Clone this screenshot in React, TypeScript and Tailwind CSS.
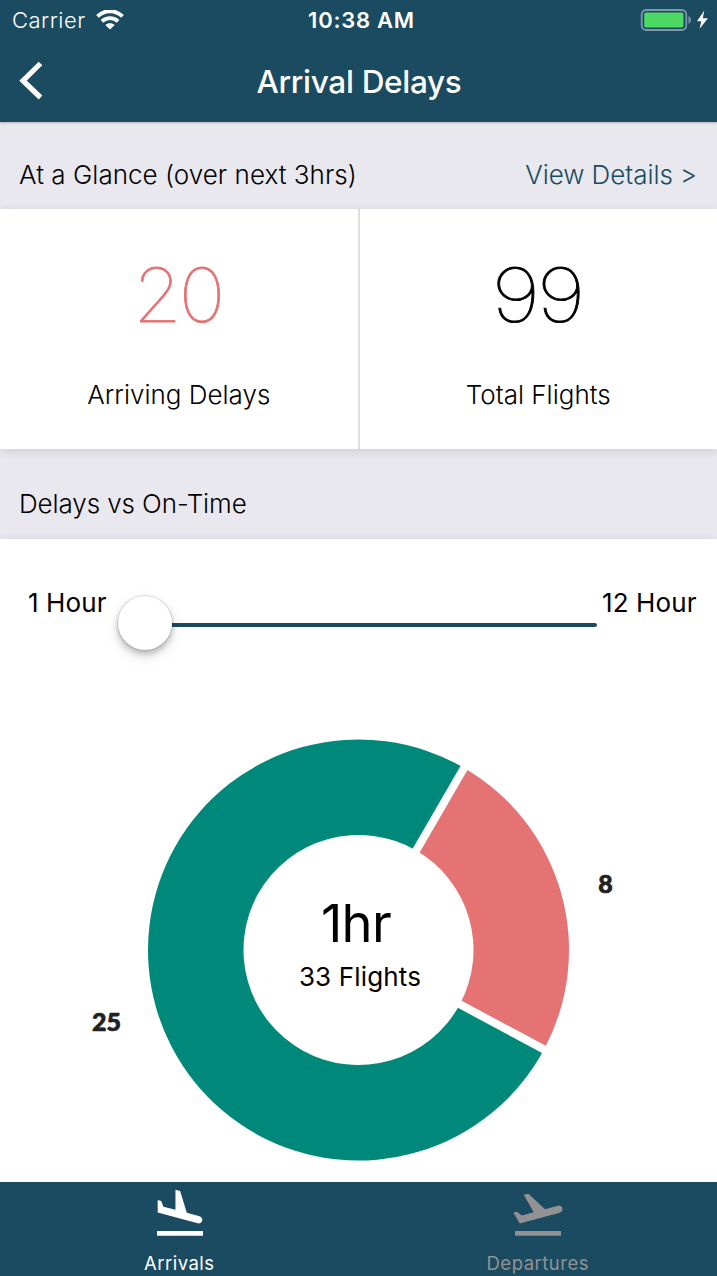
import type { ReactNode } from "react";
import { MdFlightLand, MdFlightTakeoff } from "react-icons/md";

function StatusBar() {
  return (
    <div className="grid h-10 grid-cols-3 items-center pl-3 pr-[8px]">
      <div className="flex items-center">
        <span className="text-[22px] font-light leading-10 tracking-[0.5px]">Carrier</span>
        <svg className="ml-[10px]" width="28" height="20" viewBox="0 0 28 20" fill="none" stroke="white">
          <path d="M1.5 6.4C8.5-.5 19.500-.5 26.500 6.400" strokeWidth="3.900" />
          <path d="M6 11.300C10.400 7 17.600 7 22 11.300" strokeWidth="3.800" />
          <path d="M14 19.500L9.300 15C11.800 12.700 16.200 12.700 18.700 15Z" fill="white" stroke="none" />
        </svg>
      </div>
      <span className="pl-[2px] text-center text-[22px] font-semibold leading-10 tracking-[0.75px]">10:38 AM</span>
      <svg className="justify-self-end" width="69" height="24" viewBox="0 0 69 24" fill="none">
        <rect x="1.700" y="2" width="44.600" height="20" rx="4.500" stroke="#8097a8" strokeWidth="1.800" />
        <rect x="4.200" y="4.500" width="39.300" height="15" rx="2" fill="#4cd964" />
        <path d="M48.500 8.300C51.700 9.300 51.700 14.700 48.500 15.700Z" fill="#8097a8" />
        <path d="M64.300 2.500L57 13.200H61.300L59.600 20.800L68 10.300H62.800Z" fill="white" />
      </svg>
    </div>
  );
}

function NavBar() {
  return (
    <div className="grid h-[82px] grid-cols-[60px_1fr_60px] items-center">
      <button aria-label="Back" className="pb-[2px] pl-[18px]">
        <svg width="26" height="40" viewBox="0 0 26 40" fill="none" stroke="white" strokeWidth="5.200">
          <path d="M22.500 2.500L5 19.700L22.500 36.500" />
        </svg>
      </button>
      <h1 className="pl-px pt-px text-center text-[31.500px] font-medium leading-[82px] tracking-[-0.3px]">Arrival Delays</h1>
    </div>
  );
}

function Stat({ value, label, tone }: { value: number; label: string; tone: string }) {
  return (
    <div className="flex flex-1 flex-col items-center">
      <span className={`mt-[40px] text-[75px] font-thin leading-[92px] tracking-[-3px] [-webkit-text-stroke:0.8px] ${tone}`}>{value}</span>
      <span className="mt-[36px] text-[26px] font-light leading-[36px]">{label}</span>
    </div>
  );
}

function Tab({ icon, label, tone }: { icon: ReactNode; label: string; tone: string }) {
  return (
    <button className={`flex flex-1 flex-col items-center pt-[3px] ${tone}`}>
      <span className="pl-px">{icon}</span>
      <span className="mt-[8px] text-[18.500px] leading-6 tracking-[0.500px]">{label}</span>
    </button>
  );
}

export default function App() {
  return (
    <div className="flex h-[1276px] w-[717px] flex-col overflow-hidden bg-[#e9e8ee] font-['Inter',sans-serif] text-black">
      <header className="h-[122px] shrink-0 bg-[#1a4b61] text-white shadow-[0_1px_2px_rgba(0,0,0,0.25)]">
        <StatusBar />
        <NavBar />
      </header>

      <div className="flex h-[87px] shrink-0 items-center justify-between pl-[19px] pr-5 pt-[17px] text-[26px] font-light">
        <h2 className="tracking-[0.03px]">At a Glance (over next 3hrs)</h2>
        <a className="tracking-[-0.05px] text-[#1a4b61]">View Details &gt;</a>
      </div>
      <section className="flex h-[240px] shrink-0 bg-white shadow-[0_2px_10px_rgba(0,0,0,0.12)]">
        <Stat value={20} label="Arriving Delays" tone="-translate-x-[1px] scale-x-[1.05] text-[#e57373]" />
        <div className="w-[2px] bg-[#dedede]" />
        <Stat value={99} label="Total Flights" tone="-translate-x-[1.500px] scale-x-[1.15] text-black" />
      </section>

      <h2 className="flex h-[90px] shrink-0 items-center pl-[19px] pt-[18px] text-[26px] font-light tracking-[-0.1px]">Delays vs On-Time</h2>
      <section className="flex h-[643px] shrink-0 flex-col bg-white shadow-[0_2px_10px_rgba(0,0,0,0.12)]">
        <div className="flex h-[160px] items-start pl-[28px] pr-[20px] pt-[46px] text-[26px] leading-9">
          <span className="w-[90px] whitespace-nowrap tracking-[0.1px]">1 Hour</span>
          <div className="mt-[10px] flex h-[56px] w-[479px] items-center">
            <div className="z-10 size-[54px] shrink-0 rounded-full bg-white shadow-[0_0_1px_1px_rgba(0,0,0,0.1),0_4px_6px_rgba(0,0,0,0.24),0_6px_16px_rgba(0,0,0,0.1)]" />
            <div className="mt-[4px] h-1 flex-1 rounded-r-full bg-[#1a4b61]" />
          </div>
          <span className="ml-[5px] whitespace-nowrap tracking-[0.1px]">12 Hour</span>
        </div>
        <svg width="717" height="483" viewBox="0 699 717 483">
          <path d="M464.100 767.900A210.500 210.500 0 1 0 544 1049.500L459.800 1004.400A115 115 0 1 1 416.200 850.500Z" fill="#00897b" />
          <path d="M464.100 767.900A210.500 210.500 0 0 1 544 1049.500L459.800 1004.400A115 115 0 0 0 416.200 850.500Z" fill="#e57373" />
          <path d="M408.500 863.700L470.200 757.300M449.500 998.800L557 1056.400" stroke="white" strokeWidth="8" />
          <g className="font-['Inter',sans-serif]" textAnchor="middle">
            <text x="356" y="942" fontSize="52.500" letterSpacing="-0.7">1hr</text>
            <text x="360" y="986" fontSize="26" letterSpacing="0.15">33 Flights</text>
          </g>
          <g
            className="font-['Lato',sans-serif] font-black"
            fill="#222222"
            stroke="#222222"
            strokeWidth="0.700"
            textAnchor="middle"
            fontSize="25"
          >
            <text x="605.500" y="893">8</text>
            <text x="106.500" y="1031">25</text>
          </g>
        </svg>
      </section>

      <nav className="z-10 flex h-[94px] shrink-0 bg-[#1a4b61]">
        <Tab icon={<MdFlightLand size={58} />} label="Arrivals" tone="text-white" />
        <Tab icon={<MdFlightTakeoff size={58} />} label="Departures" tone="text-[#929292]" />
      </nav>
    </div>
  );
}
